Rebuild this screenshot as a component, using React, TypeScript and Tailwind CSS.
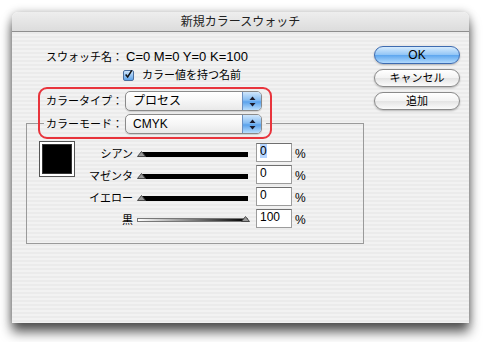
import * as React from "react";

const stripe =
  "bg-[repeating-linear-gradient(180deg,#ebebeb_0px,#ebebeb_2px,#f2f2f2_2px,#f2f2f2_4px)] bg-fixed";

function Arrows() {
  return (
    <svg width="7" height="11" viewBox="0 0 7 11">
      <path d="M3.5 0.5 L6.5 4 L0.5 4 Z" fill="#1a1a2a" />
      <path d="M3.5 10.5 L6.5 7 L0.5 7 Z" fill="#1a1a2a" />
    </svg>
  );
}

function Popup({ children }: { children: React.ReactNode }) {
  return (
    <div className="flex h-[20px] w-[137px] overflow-hidden rounded-[5px] border border-[#8a8a8a] bg-[linear-gradient(180deg,#ffffff_0%,#f6f6f6_50%,#e9e9e9_100%)] shadow-[0_1px_1px_rgba(0,0,0,0.15)]">
      <div className="flex flex-1 items-center pl-[7px] text-[12px] text-black">{children}</div>
      <div className="flex w-[19px] items-center justify-center border-l border-[#6b8fc0] bg-[linear-gradient(180deg,#cfe6fc_0%,#86bdf3_45%,#5aa2ec_55%,#b9defd_100%)]">
        <Arrows />
      </div>
    </div>
  );
}

function Thumb() {
  return (
    <svg width="9" height="6" viewBox="0 0 9 6">
      <path d="M4.5 0.5 L8.5 5.5 L0.5 5.5 Z" fill="#9a9a9a" stroke="#4a4a4a" strokeWidth="1" />
    </svg>
  );
}

function SliderRow({
  label,
  value,
  black,
  selected,
}: {
  label: string;
  value: string;
  black?: boolean;
  selected?: boolean;
}) {
  return (
    <div className="flex h-[22px] items-start">
      <div className="flex h-[22px] w-[58px] items-center justify-end text-[11px] text-black">{label}</div>
      <div className="ml-[4px] flex h-[22px] w-[111px] items-center">
        {black ? (
          <div className="relative h-[4px] w-full border border-[#777] bg-[linear-gradient(90deg,#ffffff,#000000)]">
            <div className="absolute -right-[3px] top-[-3px]">
              <Thumb />
            </div>
          </div>
        ) : (
          <div className="relative h-[5px] w-full">
            <div className="ml-[4px] h-[5px] bg-black" />
            <div className="absolute left-0 top-[-1px]">
              <Thumb />
            </div>
          </div>
        )}
      </div>
      <div className="ml-[8px] h-[19px] w-[36px] border border-[#9c9c9c] border-t-[#6f6f6f] bg-white pl-[3px] text-[12px] leading-[15px] text-black">
        <span className={selected ? "bg-[#b5d5ff]" : ""}>{value}</span>
      </div>
      <div className="ml-[3px] flex h-[22px] items-center text-[12px] text-black">%</div>
    </div>
  );
}

function AquaButton({ children, primary }: { children: React.ReactNode; primary?: boolean }) {
  return (
    <div
      className={`flex h-[18px] w-[86px] items-center justify-center rounded-full border text-[11px] text-black shadow-[0_1px_2px_rgba(0,0,0,0.25)] ${
        primary
          ? "border-[#3d6bb0] bg-[linear-gradient(180deg,#d6ebfd_0%,#93c6f6_48%,#5ea7ef_52%,#b2dafd_100%)]"
          : "border-[#8a8a8a] bg-[linear-gradient(180deg,#ffffff_0%,#f3f3f3_48%,#e4e4e4_52%,#fbfbfb_100%)]"
      }`}
    >
      {children}
    </div>
  );
}

export default function App() {
  return (
    <div className="h-[342px] w-[486px] overflow-hidden bg-white pl-[12px] pt-[12px] font-['Liberation_Sans','Noto_Sans_CJK_JP',sans-serif]">
      <div className="flex h-[311px] w-[457px] flex-col overflow-hidden rounded-t-[6px] shadow-[0_9px_12px_rgba(0,0,0,0.65),0_0_8px_rgba(0,0,0,0.25)]">
        <div className="flex h-[20px] items-center justify-center border-b border-[#8f8f8f] bg-[linear-gradient(180deg,#eeeeee_0%,#dcdcdc_100%)] text-[12px] text-[#222]">
          新規カラースウォッチ
        </div>
        <div className={`flex flex-1 ${stripe}`}>
          <div className="ml-[14px] flex w-[338px] flex-col">
            <div className="mt-[17px] flex h-[16px] items-center">
              <div className="w-[97px] text-right text-[11px] text-black">スウォッチ名：</div>
              <div className="ml-[3px] text-[13px] text-black">C=0 M=0 Y=0 K=100</div>
            </div>
            <div className="mt-[2px] flex h-[16px] items-center">
              <div className="ml-[97px] flex h-[11px] w-[11px] items-center justify-center rounded-[2px] border border-[#4b6f9e] bg-[linear-gradient(180deg,#cfe5fb,#5ea3ea)]">
                <svg width="11" height="11" viewBox="0 0 11 11" className="-mt-[2px]">
                  <path d="M2 5.5 L4.5 8.5 L9.5 0.5" fill="none" stroke="#111" strokeWidth="1.8" />
                </svg>
              </div>
              <div className="ml-[8px] text-[11px] text-black">カラー値を持つ名前</div>
            </div>
            <div className="relative z-10 ml-[12px] mt-[4px] flex h-[52px] w-[234px] flex-col rounded-[9px] border-2 border-[#e8343c] pt-[2px]">
              <div className="ml-[4px] flex h-[20px] w-[222px] items-center">
                <div className="w-[79px] text-right text-[11px] text-black">カラータイプ：</div>
                <div className="ml-[2px]">
                  <Popup>プロセス</Popup>
                </div>
              </div>
              <div className={`ml-[4px] mt-[3px] flex h-[20px] w-[222px] items-center ${stripe}`}>
                <div className="w-[79px] text-right text-[11px] text-black">カラーモード：</div>
                <div className="ml-[2px]">
                  <Popup>CMYK</Popup>
                </div>
              </div>
            </div>
            <div className="relative -mt-[16px] flex h-[121px] w-[338px] border border-[#9a9a9a] pt-[17px]">
              <div className="ml-[12px] h-[36px] w-[36px] border border-[#555] bg-white p-[2px]">
                <div className="h-full w-full border border-[#333] bg-black" />
              </div>
              <div className="mt-[2px] flex flex-col">
                <SliderRow label="シアン" value="0" selected />
                <SliderRow label="マゼンタ" value="0" />
                <SliderRow label="イエロー" value="0" />
                <SliderRow label="黒" value="100" black />
              </div>
            </div>
          </div>
          <div className="ml-[10px] mt-[14px] flex flex-col gap-[5px]">
            <AquaButton primary>
              <span className="text-[12px]">OK</span>
            </AquaButton>
            <AquaButton>キャンセル</AquaButton>
            <AquaButton>追加</AquaButton>
          </div>
        </div>
      </div>
    </div>
  );
}
